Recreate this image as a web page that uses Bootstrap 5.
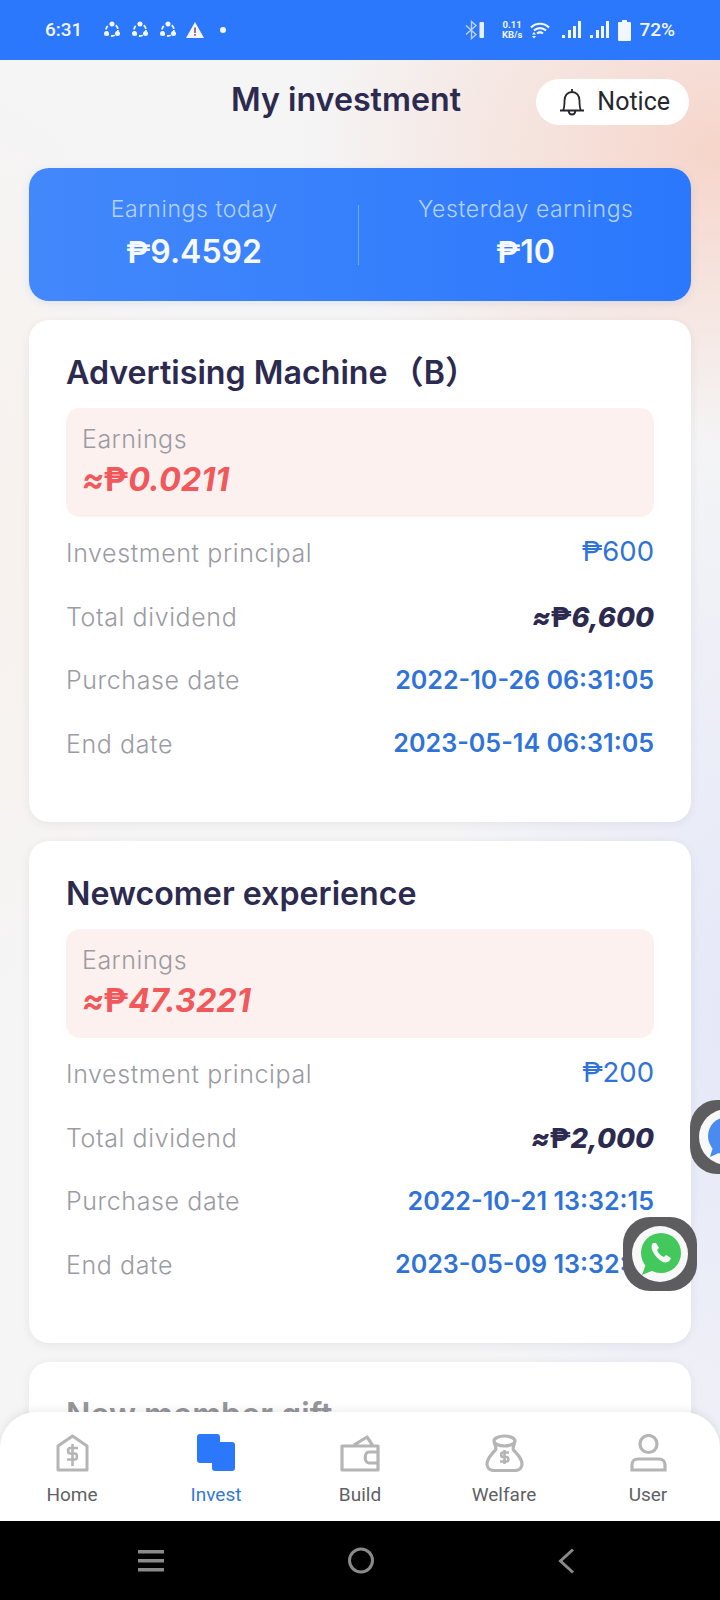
<!DOCTYPE html>
<html lang="en">
<head>
    <meta charset="UTF-8">
    <meta name="viewport" content="width=device-width, initial-scale=1.0">
    <title>My investment</title>
    <link href="https://cdn.jsdelivr.net/npm/bootstrap@5.3.0/dist/css/bootstrap.min.css" rel="stylesheet">
    <style>
        body {
            font-family: Inter, "Noto Sans CJK SC", "Liberation Sans", sans-serif;
            background: #000;
            overflow: hidden;
        }

        .phone {
            width: 720px;
            height: 1600px;
        }

        .peso {
            font-family: Roboto, sans-serif;
            font-style: normal;
        }

        .status-bar {
            height: 60px;
            padding: 0 45px;
            background: #2b78fd;
            color: #f1f6ff;
            font-family: Roboto, sans-serif;
            font-size: 19px;
            font-weight: 500;
        }

        .status-icons {
            gap: 8px;
        }

        .status-time {
            margin-right: 12px;
        }

        .net-speed {
            font-size: 9.5px;
            line-height: 10px;
            font-weight: 700;
        }

        .screen {
            background:
                radial-gradient(420px 300px at 720px 90px, #f6d5ca 0%, rgba(246, 213, 202, 0) 100%),
                radial-gradient(300px 620px at 740px 960px, #e4e7f8 0%, rgba(228, 231, 248, 0) 100%),
                radial-gradient(240px 500px at -40px 480px, #f8f1ec 0%, rgba(248, 241, 236, 0) 100%),
                #f5f5f6;
        }

        .page-head {
            height: 108px;
            padding: 20px 31px 0 0;
        }

        .page-title {
            padding-left: 231px;
            font-size: 32.2px;
            line-height: 40px;
            font-weight: 600;
            color: #2c2a4f;
        }

        .notice-pill {
            height: 46px;
            margin-top: -1px;
            padding: 0 19px 0 23px;
            gap: 12px;
            border-radius: 23px;
            background: #fff;
            font-family: Roboto, sans-serif;
            font-size: 25px;
            color: #26262e;
        }

        .page-body {
            padding: 0 29px;
        }

        .earn-banner {
            height: 133px;
            margin-bottom: 19px;
            padding-bottom: 6px;
            border-radius: 20px;
            background: linear-gradient(90deg, #4388fb 0%, #2b78fd 100%);
            box-shadow: 0 2px 8px rgba(60, 110, 200, .12);
            text-align: center;
        }

        .earn-col {
            flex: 1 1 0;
        }

        .earn-sep {
            width: 1px;
            height: 60px;
            margin-top: 6px;
            margin-left: -2px;
            margin-right: 2px;
            background: rgba(255, 255, 255, .3);
        }

        .earn-label {
            font-size: 23px;
            line-height: 32px;
            font-weight: 300;
            letter-spacing: .6px;
            color: #b3d1ff;
        }

        .earn-num {
            margin-top: 8px;
            font-size: 32px;
            line-height: 38px;
            font-weight: 600;
            color: #f6f9ff;
        }

        .invest-card {
            height: 502px;
            margin-bottom: 19px;
            padding: 32px 37px;
            border: 0;
            border-radius: 20px;
            box-shadow: 0 2px 10px rgba(40, 40, 60, .07);
        }

        .invest-name {
            margin-bottom: 14px;
            font-size: 32.2px;
            line-height: 42px;
            font-weight: 600;
            color: #2c2a4f;
        }

        .invest-name-faded {
            color: #96969b;
        }

        .paren-gap {
            margin-left: 4px;
        }

        .earn-box {
            height: 109px;
            margin-bottom: 5px;
            padding: 15px 16px;
            border-radius: 14px;
            background: #fdf1ef;
        }

        .box-label {
            font-size: 25px;
            line-height: 32px;
            font-weight: 300;
            letter-spacing: .5px;
            color: #9b9ba3;
        }

        .box-num {
            margin-top: 6px;
            font-size: 32.4px;
            line-height: 38px;
            font-weight: 700;
            font-style: italic;
            color: #f0585c;
        }

        .info-row {
            height: 63.5px;
        }

        .info-key {
            font-size: 25px;
            font-weight: 300;
            letter-spacing: .6px;
            color: #9b9ba3;
        }

        .info-blue {
            font-size: 25.1px;
            font-weight: 600;
            color: #2f73d9;
        }

        .info-plain {
            font-size: 27.5px;
            font-weight: 400;
            margin-top: -4px;
        }

        .info-dark {
            font-size: 27.5px;
            font-weight: 800;
            font-style: italic;
            color: #2c2a4f;
        }

        .tab-bar {
            height: 109px;
            padding-top: 22px;
            border-radius: 36px 36px 0 0;
            background: #fff;
            box-shadow: 0 -2px 8px rgba(0, 0, 0, .08);
        }

        .tab-item {
            width: 144px;
            font-family: Roboto, sans-serif;
            font-size: 19px;
            line-height: 24px;
            color: #5f5f66;
        }

        .tab-item svg {
            margin-bottom: 11px;
        }

        .tab-active {
            color: #3278d8;
        }

        .float-btn {
            width: 74px;
            height: 74px;
            border-radius: 27px;
            background: #5d5d5f;
        }

        .float-inner {
            width: 56px;
            height: 56px;
            border-radius: 50%;
            background: #f8f8f8;
        }

        .float-wa {
            right: 23px;
            top: 1157px;
        }

        .float-msg {
            left: 690px;
            top: 1040px;
        }

        .sys-nav {
            height: 79px;
            padding-right: 8px;
            gap: 184px;
            background: #000;
        }
    </style>
</head>
<body>
    <div class="phone d-flex flex-column">
        <!-- Status bar -->
        <div class="status-bar d-flex align-items-center justify-content-between flex-shrink-0">
            <div class="d-flex align-items-center status-icons">
                <span class="status-time">6:31</span>
                <svg width="20" height="18" viewBox="0 0 20 18" fill="none" stroke="#f1f6ff" stroke-width="1.8"><circle cx="10" cy="9" r="6" stroke-dasharray="4 2.3"/><circle cx="10" cy="3" r="2.500" fill="#f1f6ff" stroke="none"/><circle cx="4.500" cy="12.500" r="2.500" fill="#f1f6ff" stroke="none"/><circle cx="15.500" cy="12.500" r="2.500" fill="#f1f6ff" stroke="none"/></svg>
                <svg width="20" height="18" viewBox="0 0 20 18" fill="none" stroke="#f1f6ff" stroke-width="1.8"><circle cx="10" cy="9" r="6" stroke-dasharray="4 2.3"/><circle cx="10" cy="3" r="2.500" fill="#f1f6ff" stroke="none"/><circle cx="4.500" cy="12.500" r="2.500" fill="#f1f6ff" stroke="none"/><circle cx="15.500" cy="12.500" r="2.500" fill="#f1f6ff" stroke="none"/></svg>
                <svg width="20" height="18" viewBox="0 0 20 18" fill="none" stroke="#f1f6ff" stroke-width="1.8"><circle cx="10" cy="9" r="6" stroke-dasharray="4 2.3"/><circle cx="10" cy="3" r="2.500" fill="#f1f6ff" stroke="none"/><circle cx="4.500" cy="12.500" r="2.500" fill="#f1f6ff" stroke="none"/><circle cx="15.500" cy="12.500" r="2.500" fill="#f1f6ff" stroke="none"/></svg>
                <svg width="18" height="16" viewBox="0 0 18 16"><path d="M9 0 18 16H0z" fill="#f1f6ff"/><path d="M8.200 5.500h1.600v5.500H8.200zM8.200 12h1.600v1.800H8.200z" fill="#a0454f"/></svg>
                <svg class="ms-2" width="6" height="6" viewBox="0 0 6 6"><circle cx="3" cy="3" r="3" fill="#f1f6ff"/></svg>
            </div>
            <div class="d-flex align-items-center gap-2">
                <svg width="22" height="20" viewBox="0 0 22 20" fill="none" stroke="#b9d3ff" stroke-width="1.400"><path d="M2 5.500 12 14.500 7.500 18.500V1.500L12 5.500 2 14.500"/><rect x="15.500" y="2" width="4.500" height="16" rx="1" fill="#e8f0ff" stroke="none"/></svg>
                <div class="net-speed text-center ms-2">0.11<br>KB/s</div>
                <svg width="20" height="19" viewBox="0 0 20 19" fill="none" stroke="#f1f6ff" stroke-width="2.200"><path d="M1 6.500C6 1.500 14 1.500 19 6.500M4 9.500C7.500 6.200 12.500 6.200 16 9.500M7 12.500C8.800 11 11.200 11 13 12.500"/><path d="M2 13.500h4l-2-2.500zM2 15h4l-2 2.500z" fill="#f1f6ff" stroke="none"/></svg>
                <svg class="ms-1" width="20" height="18" viewBox="0 0 20 18" fill="#f1f6ff"><rect x="0" y="14" width="3" height="3"/><rect x="6" y="9" width="3" height="8"/><rect x="11" y="5" width="3" height="12"/><rect x="16" y="0" width="3" height="17"/></svg>
                <svg width="20" height="18" viewBox="0 0 20 18" fill="#f1f6ff"><rect x="0" y="14" width="3" height="3"/><rect x="6" y="9" width="3" height="8"/><rect x="11" y="5" width="3" height="12"/><rect x="16" y="0" width="3" height="17"/></svg>
                <svg width="13" height="21" viewBox="0 0 13 21"><path d="M4 0h5v2h3a1 1 0 0 1 1 1v17a1 1 0 0 1-1 1H1a1 1 0 0 1-1-1V3a1 1 0 0 1 1-1h3z" fill="#f1f6ff"/></svg>
                <span>72%</span>
            </div>
        </div>

        <!-- Scrolling screen, tab bar lies over it -->
        <div class="screen flex-grow-1 position-relative overflow-hidden">
            <div class="page-head d-flex justify-content-between align-items-start">
                <div class="page-title">My investment</div>
                <div class="notice-pill d-flex align-items-center">
                    <svg width="26" height="28" viewBox="0 0 26 28" fill="none" stroke="#26262e" stroke-width="1.800"><path d="M13 1v3M1 22.500h24M4 22.500C5.500 20 5.500 17 5.500 12.500 5.500 7.500 8.500 4 13 4s7.500 3.500 7.500 8.500c0 4.500 0 7.500 1.500 10M9.500 23c.5 2.500 2 3.500 3.500 3.500s3-1 3.500-3.500"/></svg>
                    <span>Notice</span>
                </div>
            </div>

            <div class="page-body">
                <div class="earn-banner d-flex align-items-center">
                    <div class="earn-col">
                        <div class="earn-label">Earnings today</div>
                        <div class="earn-num"><span class="peso">₱</span>9.4592</div>
                    </div>
                    <div class="earn-sep"></div>
                    <div class="earn-col">
                        <div class="earn-label">Yesterday earnings</div>
                        <div class="earn-num"><span class="peso">₱</span>10</div>
                    </div>
                </div>

                <div class="card invest-card">
                    <div class="invest-name">Advertising Machine<span class="paren-gap">（B）</span></div>
                    <div class="earn-box">
                        <div class="box-label">Earnings</div>
                        <div class="box-num">≈<span class="peso">₱</span>0.0211</div>
                    </div>
                    <div class="info-row d-flex align-items-center justify-content-between">
                        <span class="info-key">Investment principal</span>
                        <span class="info-blue info-plain"><span class="peso">₱</span>600</span>
                    </div>
                    <div class="info-row d-flex align-items-center justify-content-between">
                        <span class="info-key">Total dividend</span>
                        <span class="info-dark">≈<span class="peso">₱</span>6,600</span>
                    </div>
                    <div class="info-row d-flex align-items-center justify-content-between">
                        <span class="info-key">Purchase date</span>
                        <span class="info-blue">2022-10-26 06:31:05</span>
                    </div>
                    <div class="info-row d-flex align-items-center justify-content-between">
                        <span class="info-key">End date</span>
                        <span class="info-blue">2023-05-14 06:31:05</span>
                    </div>
                </div>

                <div class="card invest-card">
                    <div class="invest-name">Newcomer experience</div>
                    <div class="earn-box">
                        <div class="box-label">Earnings</div>
                        <div class="box-num">≈<span class="peso">₱</span>47.3221</div>
                    </div>
                    <div class="info-row d-flex align-items-center justify-content-between">
                        <span class="info-key">Investment principal</span>
                        <span class="info-blue info-plain"><span class="peso">₱</span>200</span>
                    </div>
                    <div class="info-row d-flex align-items-center justify-content-between">
                        <span class="info-key">Total dividend</span>
                        <span class="info-dark">≈<span class="peso">₱</span>2,000</span>
                    </div>
                    <div class="info-row d-flex align-items-center justify-content-between">
                        <span class="info-key">Purchase date</span>
                        <span class="info-blue">2022-10-21 13:32:15</span>
                    </div>
                    <div class="info-row d-flex align-items-center justify-content-between">
                        <span class="info-key">End date</span>
                        <span class="info-blue">2023-05-09 13:32:15</span>
                    </div>
                </div>

                <div class="card invest-card">
                    <div class="invest-name invest-name-faded">New member gift</div>
                </div>
            </div>

            <!-- Floating chat buttons -->
            <div class="float-btn float-msg position-absolute d-flex align-items-center justify-content-center">
                <div class="float-inner d-flex align-items-center justify-content-center">
                    <svg width="44" height="44" viewBox="0 0 44 44"><circle cx="22" cy="21" r="19" fill="#4a8bf0"/><path d="M8 32 5 42l11-5z" fill="#4a8bf0"/><circle cx="27" cy="20" r="10" fill="#e8edf5"/></svg>
                </div>
            </div>
            <div class="float-btn float-wa position-absolute d-flex align-items-center justify-content-center">
                <div class="float-inner d-flex align-items-center justify-content-center">
                    <svg width="44" height="44" viewBox="0 0 44 44"><circle cx="23" cy="21" r="20" fill="#43c85c"/><path d="M8 32 4 43l12-5z" fill="#43c85c"/><path d="M15 11c-2 2-2 5 0 9s6 8 10 10c3 1 6 0 7-2l1-2-5-3-2 2c-3-1-6-4-7-7l2-2-3-5z" fill="#f8f8f8"/></svg>
                </div>
            </div>

            <!-- Tab bar -->
            <div class="tab-bar position-absolute bottom-0 start-0 end-0 d-flex align-items-start">
                <div class="tab-item d-flex flex-column align-items-center">
                    <svg width="33" height="38" viewBox="0 0 33 38" fill="none" stroke="#b5b5b5" stroke-width="3" stroke-linejoin="round"><path d="M2 12 16.500 2 31 12v24H2z"/><path d="M22 14h-8c-2.500 0-2.500 5.500 0 5.500h5c2.500 0 2.500 6 0 6h-8M16.500 10v22" stroke-width="2.600"/></svg>
                    <span>Home</span>
                </div>
                <div class="tab-item tab-active d-flex flex-column align-items-center">
                    <svg width="38" height="38" viewBox="0 0 38 38" fill="#2b78fd"><rect width="23" height="29" rx="3"/><rect x="15" y="8" width="23" height="29" rx="3"/></svg>
                    <span>Invest</span>
                </div>
                <div class="tab-item d-flex flex-column align-items-center">
                    <svg width="40" height="38" viewBox="0 0 40 38" fill="none" stroke="#b5b5b5" stroke-width="3.200" stroke-linejoin="round"><path d="M2 12h36v24H2zM14 11 27 3l6 9"/><path d="M38 18H29c-5 0-5 11 0 11h9"/></svg>
                    <span>Build</span>
                </div>
                <div class="tab-item d-flex flex-column align-items-center">
                    <svg width="39" height="38" viewBox="0 0 39 38" fill="none" stroke="#b5b5b5" stroke-width="3.200" stroke-linejoin="round"><ellipse cx="19.500" cy="7" rx="10.500" ry="5"/><path d="M9.500 9c1 4 2 5 1 7C7 20 2 24 2 30c0 4 3 6.500 7 6.500h21c4 0 7-2.500 7-6.500 0-6-5-10-8.500-14-1-2 0-3 1-7"/><path d="M24 18.500h-6c-2.500 0-2.500 4.500 0 4.500h3.500c2.500 0 2.500 4.500 0 4.500H15M19.500 16v14" stroke-width="2.600"/></svg>
                    <span>Welfare</span>
                </div>
                <div class="tab-item d-flex flex-column align-items-center">
                    <svg width="37" height="38" viewBox="0 0 37 38" fill="none" stroke="#b5b5b5" stroke-width="3.200"><circle cx="18.500" cy="10" r="8.500"/><path d="M2 36v-5c0-3 2-6 6-6h21c4 0 6 3 6 6v5z"/></svg>
                    <span>User</span>
                </div>
            </div>
        </div>

        <!-- Android nav bar -->
        <div class="sys-nav d-flex align-items-center justify-content-center flex-shrink-0">
            <svg width="26" height="24" viewBox="0 0 26 24" fill="#8a8a8a"><rect y="1" width="26" height="3.500"/><rect y="10" width="26" height="3.500"/><rect y="19" width="26" height="3.500"/></svg>
            <svg width="26" height="27" viewBox="0 0 26 27" fill="none" stroke="#8a8a8a" stroke-width="3"><circle cx="13" cy="13.500" r="11.500"/></svg>
            <svg width="16" height="26" viewBox="0 0 16 26" fill="none" stroke="#8a8a8a" stroke-width="3"><path d="M15 1.500 2.500 13 15 24.500"/></svg>
        </div>
    </div>

    <script src="https://cdn.jsdelivr.net/npm/bootstrap@5.3.0/dist/js/bootstrap.bundle.min.js"></script>
</body>
</html>
